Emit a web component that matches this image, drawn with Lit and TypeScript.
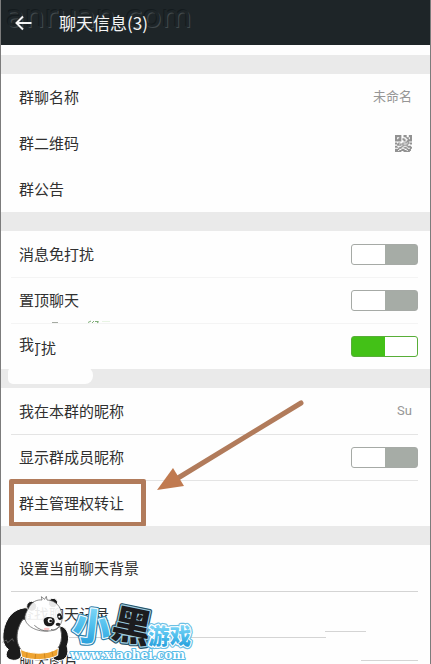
import { LitElement, html, css, svg, nothing } from "lit";
import { customElement, property, state } from "lit/decorators.js";

/** Two-part rectangular switch backed by a native checkbox. */
@customElement("toggle-row")
class ToggleRow extends LitElement {
  @property() label = "";
  @property({ type: Boolean }) on = false;

  static styles = css`
    :host { display: block; }
    label {
      display: flex;
      align-items: center;
      justify-content: space-between;
      height: 46px;
    }
    input {
      appearance: none;
      box-sizing: border-box;
      width: 67px;
      height: 21px;
      margin: 0;
      border: 1px solid #a6aaa6;
      border-radius: 3px;
      background: linear-gradient(to right, #fff 50%, #a6aca6 50%);
    }
    input:checked {
      border-color: #58ae38;
      background: linear-gradient(to right, #43c117 50%, #fff 50%);
    }
  `;

  render() {
    return html`<label>
      <slot>${this.label}</slot>
      <input type="checkbox" .checked=${this.on}
        @change=${(e: Event) => (this.on = (e.target as HTMLInputElement).checked)} />
    </label>`;
  }
}

const qrRows = [
  "1111110011100111",
  "1111110011100111",
  "1100110000111011",
  "1101110110011011",
  "1111110111001111",
  "1111110011011111",
  "0000000000111000",
  "1101100111101111",
  "1111011100011011",
  "0011110111110000",
  "1100001100011110",
  "1110111011101111",
  "0001110001110011",
  "1111001110011110",
  "1110111111101110",
  "1111110011111100",
];

/** Panda mascot with the site name next to it. */
@customElement("brand-mark")
class BrandMark extends LitElement {
  static styles = css`
    :host { display: block; }
    svg { display: block; width: 200px; height: 74px; }
    .cjk { font-family: "Noto Sans CJK SC", sans-serif; font-weight: 900; }
    .url { font-family: "DejaVu Serif", serif; font-weight: 700; font-size: 36px; }
    .outer { paint-order: stroke; stroke-linejoin: round; }
  `;

  glyph(text: string, x: number, y: number, size: number, angle: number, fill: string, edge: string, inner: string) {
    const turn = `rotate(${angle} ${x} ${y})`;
    return svg`
      <g class="cjk outer" font-size=${size} transform=${turn}>
        <text x=${x} y=${y} fill=${edge} stroke=${edge} stroke-width="14" aria-hidden="true">${text}</text>
        <text x=${x} y=${y} fill=${fill} stroke=${inner} stroke-width="7">${text}</text>
      </g>`;
  }

  render() {
    return html`<svg viewBox="0 180 600 222">
      <defs>
        <linearGradient id="sky" x1="0" y1="0" x2="0" y2="1">
          <stop offset="0.1" stop-color="#8adcfa" />
          <stop offset="0.55" stop-color="#4dbdec" />
          <stop offset="1" stop-color="#1a95d6" />
        </linearGradient>
      </defs>
      <g stroke="#fff" stroke-width="3" stroke-linejoin="round">
        <path fill="#1b1b1b" d="M82 233 C50 232 22 250 10 290 C2 320 4 345 22 358 C10 372 14 390 38 391 C58 392 66 376 60 358 L75 300 Z" />
        <path fill="#1b1b1b" d="M178 288 C202 292 208 325 198 348 C206 372 196 392 172 392 C154 392 150 376 158 362 L170 330 Z" />
        <path fill="#fff" stroke="#555" d="M66 268 C42 300 42 346 66 364 C92 378 148 378 170 356 C190 330 182 288 164 268 Z" />
        <path fill="#efa431" d="M58 358 C90 374 144 374 172 354 L170 376 C142 392 92 392 62 381 Z" />
        <path fill="none" stroke="#b97618" stroke-width="2" d="M78 368L77 383 M104 372L102 387 M130 370L132 386 M153 364L156 379" />
        <circle cx="92" cy="229" r="15" fill="#1b1b1b" />
        <circle cx="156" cy="219" r="14" fill="#1b1b1b" />
        <path fill="#fff" fill-opacity="0.9" stroke="#555" stroke-width="2" d="M82 236 C90 216 108 208 123 210 L121 200 L131 208 L136 199 L138 210 C164 211 180 230 183 254 C188 282 168 304 140 303 C112 306 78 292 72 268 C70 256 76 246 82 236 Z" />
      </g>
      <path fill="#1b1b1b" d="M128 273 C126 262 144 257 157 264 C166 273 160 287 147 289 C134 290 129 284 128 273 Z" />
      <ellipse cx="176" cy="260" rx="7" ry="10" fill="#1b1b1b" transform="rotate(-20 176 260)" />
      <circle cx="147" cy="272" r="7" fill="#fff" />
      <circle cx="149" cy="273" r="4" fill="#111" />
      <circle cx="175" cy="260" r="3" fill="#fff" />
      <ellipse cx="171" cy="283" rx="7" ry="5" fill="#222" />
      <ellipse cx="137" cy="297" rx="9" ry="4" fill="#ffc7c7" />
      <path fill="none" stroke="#444" stroke-width="2" d="M150 298 Q163 305 174 291 M100 286 Q120 304 142 303" />
      <path fill="none" stroke="#777" stroke-width="2" d="M4 337 L16 330 L20 338 L34 326 L38 334" />

      ${this.glyph("小", 211, 325, 114, 7, "url(#sky)", "#2c7da8", "#eefbff")}
      ${this.glyph("黑", 326, 318, 118, 12, "#1c1c1f", "#2a5468", "#9ccde0")}
      ${this.glyph("游戏", 442, 343, 64, 0, "url(#sky)", "#6cc0e4", "#fff")}
      <text class="url outer" x="208" y="386" fill="#fff" stroke="#55b9e6" stroke-width="6">www.xiaohei.com</text>
    </svg>`;
  }
}

@customElement("app-root")
class AppRoot extends LitElement {
  @state() private groupName = "未命名";
  @state() private nickname = "Su";

  static styles = css`
    :host {
      display: block;
      position: relative;
      box-sizing: border-box;
      height: 100vh;
      overflow: hidden;
      border: solid #7c7c7c;
      border-width: 0 1px;
      background: #fefefe;
      color: #303030;
      font: 15px/22px "Noto Sans CJK SC", sans-serif;
    }
    header {
      position: relative;
      display: flex;
      align-items: center;
      gap: 26px;
      height: 45px;
      padding-left: 13px;
      background: #1e2528;
      color: #f4f4f4;
    }
    .mark {
      position: absolute;
      left: 5px;
      top: 0;
      font: 31px/32px "DejaVu Sans", sans-serif;
      color: #1e2528;
      text-shadow: -1px -1px 0 #141b1e, 1px 1px 0 #41494c;
    }
    .back {
      position: relative;
      display: flex;
      padding: 0;
      border: 0;
      background: none;
      color: inherit;
    }
    h1 {
      position: relative;
      margin: 0;
      font-size: 17px;
      line-height: 24px;
      font-weight: 400;
    }
    main { padding-top: 10px; }
    section {
      position: relative;
      border-top: 19px solid #eaeaea;
      padding: 0 12px 0 10px;
    }
    .row {
      position: relative;
      box-sizing: border-box;
      height: 46px;
      width: 100%;
      padding: 0 0 0 8px;
      display: block;
      background: none;
      border: 0;
      color: inherit;
      font: inherit;
      text-align: left;
    }
    button.row {
      display: flex;
      align-items: center;
      justify-content: space-between;
    }
    .row + .row::before {
      content: "";
      position: absolute;
      inset: 0 0 auto 0;
      height: 1px;
      background: var(--line);
    }
    .plain { --line: transparent; }
    .faint { --line: #f4f4f4; }
    .light { --line: #e4e4e4; }
    .strong { --line: #d4d4d4; }
    .value {
      padding-right: 6px;
      font: 13px/20px Roboto, "Noto Sans CJK SC", sans-serif;
      color: #969696;
    }
    .qr { padding-right: 6px; }
    .row.part::before { right: 92px; }
    .cover { display: flex; height: 26px; }
    .cover .top { position: relative; z-index: 1; width: 16px; background: #fefefe; }
    .cover .under { margin-left: -9px; padding-top: 4px; }
    .patch {
      position: absolute;
      left: 7px;
      bottom: -15px;
      width: 85px;
      height: 17px;
      border-radius: 5px 8px 8px 5px;
      background: #fefefe;
      z-index: 1;
    }
    .specks { position: absolute; left: 49px; top: 89px; }
    .picked::after {
      content: "";
      position: absolute;
      left: -2px;
      top: -1px;
      width: 127px;
      height: 38px;
      border: 5px solid #b17b5b;
      border-radius: 2px;
    }
    .pointer { position: absolute; left: 155px; top: 11px; }
    .stubs { position: absolute; right: 11px; top: 84px; }
    brand-mark { position: absolute; left: 0; bottom: 0; }
    svg { display: block; }
  `;

  private item(label: string, extra: unknown = nothing, cls = "") {
    return html`<button class="row ${cls}" type="button"><span>${label}</span>${extra}</button>`;
  }

  render() {
    const modules = qrRows.flatMap((r, y) =>
      [...r].map((c, x) => (c === "1" ? `M${x} ${y}h1v1h-1z` : ""))).join("");
    return html`
      <header>
        <span class="mark">anruan.com</span>
        <button class="back" type="button" aria-label="返回">
          <svg width="19" height="18" viewBox="0 0 19 18" fill="none" stroke="currentColor" stroke-width="2">
            <path d="M9 2.5 L2.5 9 L9 15.5 M3 9 H17.5" />
          </svg>
        </button>
        <h1>聊天信息(3)</h1>
      </header>
      <main>
        <section class="plain">
          ${this.item("群聊名称", html`<span class="value">${this.groupName}</span>`)}
          ${this.item("群二维码", html`<svg class="qr" width="17" height="17" viewBox="0 0 16 16" fill="#929292"><path d=${modules} /></svg>`)}
          ${this.item("群公告")}
        </section>
        <section class="faint">
          <toggle-row class="row" label="消息免打扰"></toggle-row>
          <toggle-row class="row" label="置顶聊天"></toggle-row>
          <toggle-row class="row" on>
            <span class="cover"><span class="top">我</span><span class="under">打扰</span></span>
          </toggle-row>
          <svg class="specks" width="60" height="4" viewBox="0 0 60 4" fill="none">
            <path stroke="#a5aaa2" d="M2 2.5H8" />
            <path stroke="#7fae78" d="M38 2.5l3-1.5M42 3l2-2M45 1.5h3M47 3l2-1.5" />
            <path stroke="#e8f4e4" d="M52 1.5h8" />
          </svg>
          <div class="patch"></div>
        </section>
        <section class="light">
          ${this.item("我在本群的昵称", html`<span class="value">${this.nickname}</span>`)}
          <toggle-row class="row" label="显示群成员昵称"></toggle-row>
          ${this.item("群主管理权转让", nothing, "picked")}
          <svg class="pointer" width="150" height="94" viewBox="0 0 150 94">
            <path d="M145 4 L22 79" stroke="#b17b5b" stroke-width="5" stroke-linecap="round" />
            <path d="M1 91 L17 69 L28 87 Z" fill="#c07a50" />
          </svg>
        </section>
        <section class="strong">
          ${this.item("设置当前聊天背景")}
          ${this.item("查找聊天记录")}
          ${this.item("聊天图片", nothing, "part")}
          <svg class="stubs" width="95" height="34" viewBox="0 0 95 34" stroke="#d4d4d4">
            <path d="M1 2.5H42M37 31.5H94" />
          </svg>
        </section>
      </main>
      <brand-mark></brand-mark>
    `;
  }
}
